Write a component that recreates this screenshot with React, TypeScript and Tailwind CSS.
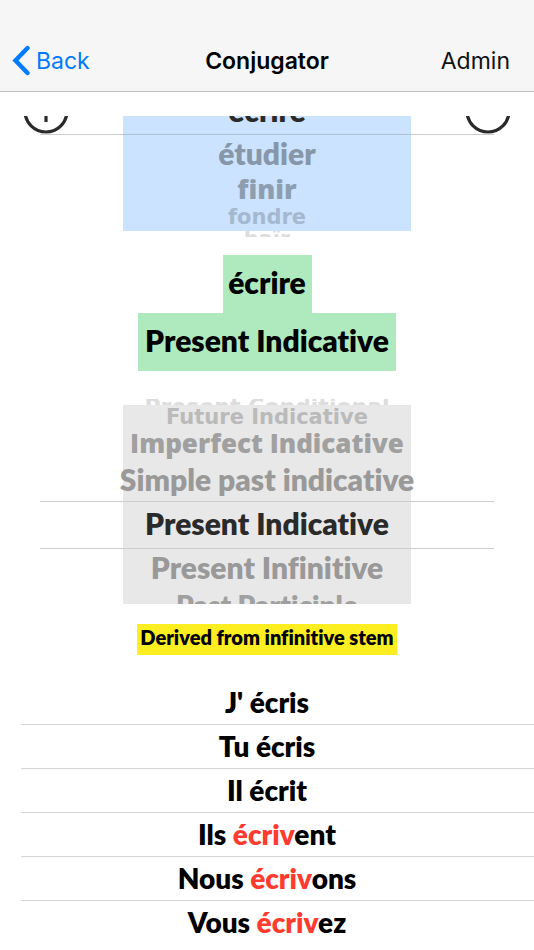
import React from 'react';
import clsx from 'clsx';

interface PickerRow {
  label: string;
  className: string;
}

interface Conjugation {
  pronoun: string;
  stem: string;
  ending: string;
  irregular?: boolean;
}

const verbs: PickerRow[] = [
  { label: 'étudier', className: 'h-9 text-[30px] text-[#8797a9]' },
  { label: 'finir', className: 'h-9 font-["Open_Sans"] text-[27px] text-[#8d9eb1]' },
  { label: 'fondre', className: 'h-6 pb-1 font-["DejaVu_Sans"] text-[21px] leading-5 text-[#a4b8cf]' },
];

const tenses: PickerRow[] = [
  { label: 'Future Indicative', className: 'h-6 font-["DejaVu_Sans"] text-[21px] leading-5 text-[#bababa]' },
  { label: 'Imperfect Indicative', className: 'h-8 pb-1 font-["Open_Sans"] text-[26px] text-[#a0a0a0]' },
  { label: 'Simple past indicative', className: 'h-10 pb-1 text-[30px] text-[#999999]' },
];

const conjugations: Conjugation[] = [
  { pronoun: "J'", stem: 'écri', ending: 's' },
  { pronoun: 'Tu', stem: 'écri', ending: 's' },
  { pronoun: 'Il', stem: 'écri', ending: 't' },
  { pronoun: 'Ils', stem: 'écriv', ending: 'ent', irregular: true },
  { pronoun: 'Nous', stem: 'écriv', ending: 'ons', irregular: true },
  { pronoun: 'Vous', stem: 'écriv', ending: 'ez', irregular: true },
];

const PickerOption: React.FC<PickerRow & { selected?: boolean }> = ({ label, className, selected }) => (
  <button
    type="button"
    role="option"
    aria-selected={!!selected}
    className={clsx('flex w-full shrink-0 items-center justify-center whitespace-nowrap font-extrabold', className)}
  >
    {label}
  </button>
);

const NavBar: React.FC = () => (
  <header className="grid grid-cols-3 items-end border-b border-[#bdbdbd] bg-[#f6f6f6] px-3 pt-[45px] pb-[14px] font-[Inter] text-[23px] leading-8">
    <button type="button" className="flex items-center gap-[6px] text-[#007aff]">
      <svg width="18" height="32" viewBox="0 0 18 32" fill="none" stroke="currentColor" strokeWidth="4.4" strokeLinecap="round">
        <path d="M15.5 3 3.5 15.5l12 12.5" />
      </svg>
      Back
    </button>
    <h1 className="text-center font-semibold text-black">Conjugator</h1>
    <button type="button" className="justify-self-end pr-3 text-[#111111]">
      Admin
    </button>
  </header>
);

const App: React.FC = () => {
  return (
    <div className="min-h-screen overflow-hidden bg-white font-['Lato',sans-serif] text-black [font-variant-ligatures:none]">
      <NavBar />

      <main className="flex flex-col items-center">
        {/* Verb picker */}
        <div role="listbox" aria-label="Verb" className="mt-6 flex w-full flex-col items-center">
          <div className="flex w-full justify-between px-[23px]">
            <button type="button" aria-label="Info" className="h-[18px] w-[46px] overflow-hidden">
              <svg width="46" height="18" viewBox="0 27 46 18" fill="none" stroke="#2a2a2a" strokeWidth="3.2">
                <circle cx="23" cy="22" r="21" />
                <path d="M23 14v19" />
              </svg>
            </button>
            <div className="flex h-[18px] w-72 flex-col justify-end overflow-hidden bg-[#cce3ff]">
              <PickerOption label="écrire" className="h-12 text-[30px] text-[#2a2a2a]" selected />
            </div>
            <button type="button" aria-label="More" className="h-[18px] w-[46px] overflow-hidden">
              <svg width="46" height="18" viewBox="0 27 46 18" fill="none" stroke="#2a2a2a" strokeWidth="3.2">
                <circle cx="23" cy="22" r="21" />
              </svg>
            </button>
          </div>
          <div className="flex w-full flex-col items-center px-10">
            <div className="flex h-px w-full justify-center bg-[#cccccc]">
              <div className="w-72 bg-[#adbfd3]" />
            </div>
            <div className="flex w-72 flex-col bg-[#cce3ff]">
              {verbs.map((row) => (
                <PickerOption key={row.label} {...row} />
              ))}
            </div>
            <div className="h-[6px] overflow-hidden">
              <PickerOption label="haïr" className="font-['DejaVu_Sans'] text-[21px] leading-4 text-[#dddddd]" />
            </div>
          </div>
        </div>

        {/* Current selection */}
        <div className="mt-[18px] flex w-[89px] justify-center bg-[#afe9be] pb-1 text-[30px] leading-[54px] font-extrabold">
          écrire
        </div>
        <div className="flex w-[258px] justify-center bg-[#afe9be] pb-1 text-[30px] leading-[54px] font-extrabold whitespace-nowrap">
          Present Indicative
        </div>

        {/* Tense picker */}
        <div role="listbox" aria-label="Tense" className="mt-7 flex w-full flex-col items-center px-10">
          <div className="h-[6px] overflow-hidden">
            <PickerOption
              label="Present Conditional"
              className="font-['DejaVu_Sans'] text-[22px] leading-4 text-[#dddddd]"
            />
          </div>
          <div className="flex w-72 flex-col items-center bg-[#e8e8e8]">
            {tenses.map((row) => (
              <PickerOption key={row.label} {...row} />
            ))}
          </div>
          <div className="flex w-full justify-center border-y border-[#cccccc]">
            <div className="w-72 bg-[#e8e8e8]">
              <PickerOption
                label="Present Indicative"
                className="h-[46px] pb-1 text-[30px] text-[#2a2a2a]"
                selected
              />
            </div>
          </div>
          <div className="flex h-[55px] w-72 flex-col overflow-hidden bg-[#e8e8e8]">
            <PickerOption label="Present Infinitive" className="h-9 text-[30px] text-[#999999]" />
            <PickerOption label="Past Participle" className="h-10 text-[28px] text-[#a0a0a0]" />
          </div>
        </div>

        <p className="mt-5 flex w-[260px] justify-center bg-[#fcee21] pb-1 text-[20px] leading-[27px] font-extrabold whitespace-nowrap">
          Derived from infinitive stem
        </p>

        {/* Conjugation list */}
        <ul className="mt-[26px] w-full pl-[21px]">
          {conjugations.map((c) => (
            <li
              key={c.pronoun}
              className="h-11 border-b border-[#d5d5d5] pr-[21px] text-center text-[28px] leading-[43px] font-extrabold last:border-b-0"
            >
              {c.pronoun} <span className={clsx(c.irregular && 'text-[#ff3b30]')}>{c.stem}</span>
              {c.ending}
            </li>
          ))}
        </ul>
      </main>
    </div>
  );
};

export default App;
